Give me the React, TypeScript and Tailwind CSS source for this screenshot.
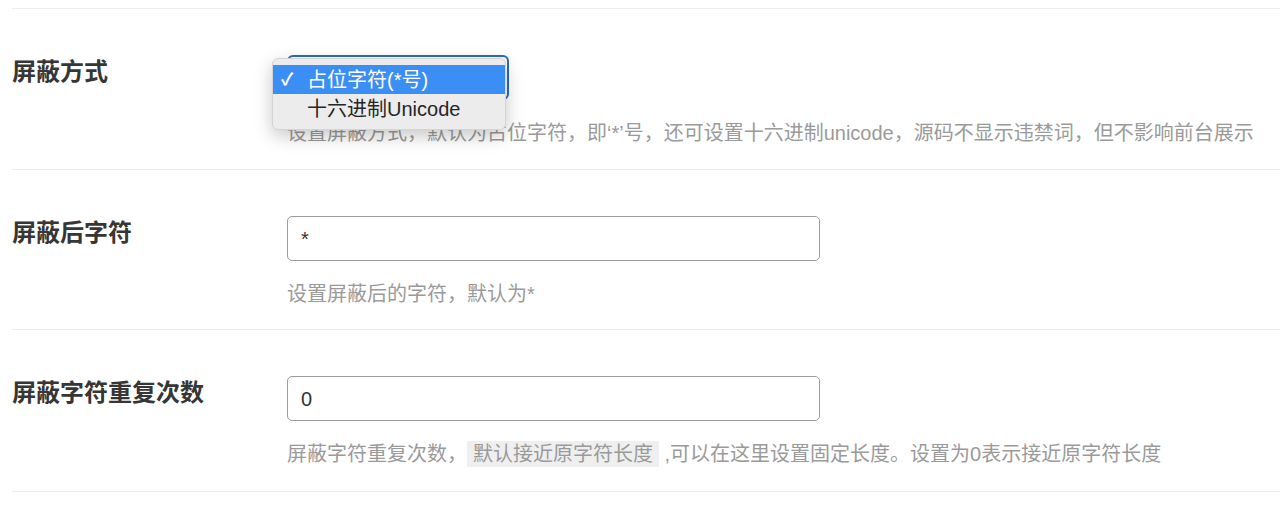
import React from "react";

function Row({
  label,
  children,
  desc,
  pb,
}: {
  label: string;
  children: React.ReactNode;
  desc: React.ReactNode;
  pb: string;
}) {
  return (
    <div className={"flex border-b border-[#ececec] pt-[46px] " + pb}>
      <div className="w-[275px] shrink-0">
        <div className="mt-[1px] text-[24px] leading-[32px] font-bold text-[#363636]">{label}</div>
      </div>
      <div className="flex flex-col">
        {children}
        <div className="mt-[19px] text-[20px] leading-[28px] text-[#9a9a9a] whitespace-nowrap">{desc}</div>
      </div>
    </div>
  );
}

export default function App() {
  return (
    <div className="min-h-screen bg-white pt-2 pl-3 font-['Liberation_Sans','Noto_Sans_CJK_SC',sans-serif]">
      <div className="border-t border-[#ececec]">
        <Row
          label="屏蔽方式"
          pb="pb-[22px]"
          desc={
            <>
              设置屏蔽方式，默认为占位字符，即‘*’号，还可设置十六进制unicode，源码不显示违禁词，但不影响前台展示
            </>
          }
        >
          <div className="relative h-[45px] w-[222px]">
            <div className="h-full w-full rounded-[6px] border-2 border-[#2a6cb3] bg-white" />
            <div className="absolute left-[-15px] top-[3px] z-10 w-[234px] rounded-[6px] border border-[#d4d4d4] bg-[#ececec] py-[6px] shadow-[0_6px_18px_rgba(0,0,0,0.22)]">
              <div className="relative flex h-[29px] items-center bg-[#3a8ef4] pl-[34px] text-[20px] text-white">
                <span className="absolute left-[8px] top-[1px] text-[17px] font-bold leading-[27px]">✓</span>
                占位字符(*号)
              </div>
              <div className="flex h-[29px] items-center pl-[34px] text-[20px] text-[#262626]">十六进制Unicode</div>
            </div>
          </div>
        </Row>
        <Row label="屏蔽后字符" pb="pb-[21px]" desc="设置屏蔽后的字符，默认为*">
          <div className="flex h-[45px] w-[533px] items-center rounded-[5px] border border-[#9c9c9c] pl-[13px] text-[20px] text-[#333]">
            *
          </div>
        </Row>
        <Row
          label="屏蔽字符重复次数"
          pb="pb-[23px]"
          desc={
            <>
              屏蔽字符重复次数，<span className="bg-[#efefef] px-[6px] py-[2px]">默认接近原字符长度</span> ,可以在这里设置固定长度。设置为0表示接近原字符长度
            </>
          }
        >
          <div className="flex h-[45px] w-[533px] items-center rounded-[5px] border border-[#9c9c9c] pl-[13px] text-[20px] text-[#333]">
            0
          </div>
        </Row>
      </div>
    </div>
  );
}
